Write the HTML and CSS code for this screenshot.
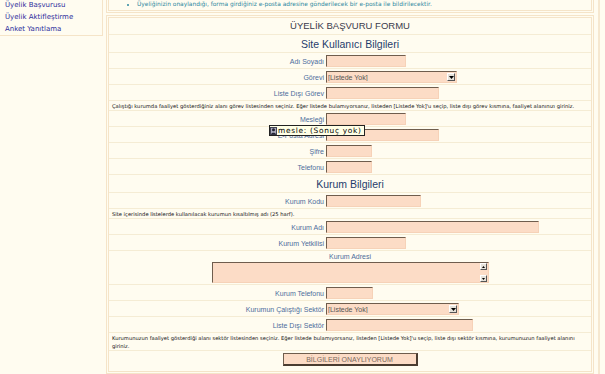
FILE: index.html
```html
<!DOCTYPE html>
<html lang="tr">
<head>
    <meta charset="UTF-8">
    <meta name="viewport" content="width=device-width, initial-scale=1.0">
    <title>Üyelik Başvurusu</title>
    <link rel="stylesheet" href="styles.css">
</head>
<body>
    <div class="page">
        <nav class="sidebar">
            <ul class="menu">
                <li><a href="#">Üyelik Başvurusu</a></li>
                <li><a href="#">Üyelik Aktifleştirme</a></li>
                <li><a href="#">Anket Yanıtlama</a></li>
            </ul>
        </nav>

        <main class="main">
            <div class="notice">
                <ul>
                    <li>Üyeliğinizin onaylandığı, forma girdiğiniz e-posta adresine gönderilecek bir e-posta ile bildirilecektir.</li>
                </ul>
            </div>

            <form class="form-box" onsubmit="return false">
                <div class="row title">ÜYELİK BAŞVURU FORMU</div>
                <div class="row section">Site Kullanıcı Bilgileri</div>

                <div class="row field">
                    <label for="adsoyad">Adı Soyadı</label>
                    <input id="adsoyad" type="text" class="w80">
                </div>
                <div class="row field">
                    <label for="gorev">Görevi</label>
                    <span class="select w131">
                        <select id="gorev"><option>[Listede Yok]</option></select>
                        <span class="drop"><svg width="5" height="3" viewBox="0 0 5 3"><path d="M0 0H5L2.5 3Z" fill="#000"/></svg></span>
                    </span>
                </div>
                <div class="row field">
                    <label for="disgorev">Liste Dışı Görev</label>
                    <input id="disgorev" type="text" class="w113">
                </div>
                <div class="row help">Çalıştığı kurumda faaliyet gösterdiğiniz alanı görev listesinden seçiniz. Eğer listede bulamıyorsanız, listeden [Listede Yok]'u seçip, liste dışı görev kısmına, faaliyet alanınızı giriniz.</div>
                <div class="row field">
                    <label for="meslek">Mesleği</label>
                    <input id="meslek" type="text" class="w80">
                </div>
                <div class="row field has-tip">
                    <label for="eposta">E-Posta Adresi</label>
                    <input id="eposta" type="text" class="w113">
                    <div class="tip">
                        <svg width="7" height="8" viewBox="0 0 7 8"><rect x="0" y="0" width="7" height="8" fill="#a9a9bb"/><rect x="0.5" y="0.5" width="6" height="7" fill="none" stroke="#445"/><circle cx="3.5" cy="2.8" r="1.5" fill="#223"/><path d="M1 7.5C1.2 5 5.8 5 6 7.5Z" fill="#223"/></svg>
                        <span>mesle: (Sonuç yok)</span>
                    </div>
                </div>
                <div class="row field">
                    <label for="sifre">Şifre</label>
                    <input id="sifre" type="password" class="w46">
                </div>
                <div class="row field">
                    <label for="telefon">Telefonu</label>
                    <input id="telefon" type="text" class="w46">
                </div>

                <div class="row section">Kurum Bilgileri</div>

                <div class="row field">
                    <label for="kurumkodu">Kurum Kodu</label>
                    <input id="kurumkodu" type="text" class="w95">
                </div>
                <div class="row help">Site içerisinde listelerde kullanılacak kurumun kısaltılmış adı (25 harf).</div>
                <div class="row field">
                    <label for="kurumadi">Kurum Adı</label>
                    <input id="kurumadi" type="text" class="w213">
                </div>
                <div class="row field">
                    <label for="yetkili">Kurum Yetkilisi</label>
                    <input id="yetkili" type="text" class="w80">
                </div>
                <div class="row block">
                    <label for="adres">Kurum Adresi</label>
                    <span class="area">
                        <textarea id="adres"></textarea>
                        <span class="scroll">
                            <span class="sbtn"><svg width="3" height="2" viewBox="0 0 3 2"><path d="M0 2H3L1.5 0Z" fill="#000"/></svg></span>
                            <span class="sbtn"><svg width="3" height="2" viewBox="0 0 3 2"><path d="M0 0H3L1.5 2Z" fill="#000"/></svg></span>
                        </span>
                    </span>
                </div>
                <div class="row field">
                    <label for="kurumtel">Kurum Telefonu</label>
                    <input id="kurumtel" type="text" class="w47">
                </div>
                <div class="row field">
                    <label for="sektor">Kurumun Çalıştığı Sektör</label>
                    <span class="select w133">
                        <select id="sektor"><option>[Listede Yok]</option></select>
                        <span class="drop"><svg width="5" height="3" viewBox="0 0 5 3"><path d="M0 0H5L2.5 3Z" fill="#000"/></svg></span>
                    </span>
                </div>
                <div class="row field">
                    <label for="dissektor">Liste Dışı Sektör</label>
                    <input id="dissektor" type="text" class="w147">
                </div>
                <div class="row help">Kurumunuzun faaliyet gösterdiği alanı sektör listesinden seçiniz. Eğer listede bulamıyorsanız, listeden [Listede Yok]'u seçip, liste dışı sektör kısmına, kurumunuzun faaliyet alanını giriniz.</div>
                <div class="row actions">
                    <button type="submit" class="submit-btn">BİLGİLERİ ONAYLIYORUM</button>
                </div>
            </form>
        </main>
    </div>
</body>
</html>
```

FILE: styles.css
```css
body {
    margin: 0;
    background-color: #fffcf0;
    font-family: "Liberation Sans", Arial, sans-serif;
    overflow: hidden;
}
.page {
    display: flex;
    width: 598px;
    height: 374px;
    border-right: 2px solid #f6e8d0;
}
.sidebar {
    width: 103px;
    flex-shrink: 0;
}
.menu {
    list-style: none;
    margin: -2px 0 0 0;
    padding: 0 0 0 5px;
    border: 1px solid #f5e4c8;
    border-left: none;
}
.menu li {
    height: 12px;
    line-height: 12px;
    font-family: "DejaVu Sans", Verdana, sans-serif;
    font-size: 7px;
}
.menu a {
    color: #2e2e9c;
    text-decoration: none;
}
.main {
    width: 488px;
    margin-left: 3px;
}
.notice {
    height: 11px;
    margin-top: -1px;
    border: 3px double #f5e4c8;
    border-top: none;
}
.notice ul {
    margin: 0;
    padding: 0 0 0 28px;
}
.notice li {
    font-family: "DejaVu Sans", Verdana, sans-serif;
    font-size: 5.9px;
    line-height: 11px;
    color: #2d88a0;
}
.form-box {
    margin-top: 2px;
    border: 3px double #f5e4c8;
    height: 359px;
    box-sizing: border-box;
}
.row {
    border-bottom: 1px solid #f5ecd4;
}
.title {
    height: 16px;
    line-height: 16px;
    text-align: center;
    font-size: 9.5px;
    color: #3a3a4c;
}
.section {
    height: 17px;
    line-height: 19px;
    text-align: center;
    font-size: 10.5px;
    color: #1f3c6c;
}
.field {
    display: grid;
    grid-template-columns: 215px auto;
    justify-content: start;
    align-items: center;
    column-gap: 2px;
    padding: 2px 0 1px 0;
    position: relative;
}
.field label,
.block label {
    text-align: right;
    font-size: 7px;
    color: #4d6c9c;
}
.help {
    padding: 1px 3px 0 3px;
    font-family: "DejaVu Sans", Verdana, sans-serif;
    font-size: 5.2px;
    line-height: 8px;
    color: #111;
}
input[type="text"],
input[type="password"],
textarea,
.select {
    box-sizing: border-box;
    height: 12px;
    margin: 0;
    padding: 0;
    background-color: #fcdcc6;
    border-style: solid;
    border-width: 1px;
    border-color: #6f5d4d #f6d2b8 #f6d2b8 #6f5d4d;
    font-family: inherit;
}
.select {
    display: inline-flex;
    align-items: center;
}
.select select {
    flex: 1;
    min-width: 0;
    height: 100%;
    border: none;
    padding: 0 0 0 1px;
    background: transparent;
    appearance: none;
    font-family: inherit;
    font-size: 7px;
    color: #555;
    outline: none;
}
.drop {
    display: flex;
    align-items: center;
    justify-content: center;
    width: 8px;
    height: 8px;
    margin-right: 1px;
    background-color: #e6e2da;
    border: 1px solid;
    border-color: #fff #555 #555 #fff;
    box-sizing: border-box;
}
.w46 { width: 46px; }
.w47 { width: 47px; }
.w80 { width: 80px; }
.w95 { width: 95px; }
.w113 { width: 113px; }
.w131 { width: 131px; }
.w133 { width: 133px; }
.w147 { width: 147px; }
.w213 { width: 213px; }
.tip {
    position: absolute;
    left: 160px;
    top: -2px;
    display: flex;
    align-items: center;
    gap: 1px;
    padding: 0 2px 0 0;
    background-color: #ffffe6;
    border: 1px solid #222;
    font-family: "DejaVu Sans", Verdana, sans-serif;
    font-size: 7.4px;
    letter-spacing: 0.7px;
    line-height: 9px;
    color: #000;
}
.block {
    display: flex;
    flex-direction: column;
    align-items: center;
    padding: 1px 0 1px 0;
}
.block label {
    text-align: center;
    line-height: 9px;
}
.area {
    display: flex;
    width: 277px;
    height: 21px;
    margin-top: 1px;
    background-color: #fcdcc6;
    border: 1px solid;
    border-color: #6f5d4d #f6d2b8 #f6d2b8 #6f5d4d;
    box-sizing: border-box;
}
.area textarea {
    flex: 1;
    height: 100%;
    border: none;
    resize: none;
    background: transparent;
}
.scroll {
    display: flex;
    flex-direction: column;
    justify-content: space-between;
    width: 7px;
    margin-right: 1px;
}
.sbtn {
    display: flex;
    align-items: center;
    justify-content: center;
    height: 7px;
    background-color: #e6e2da;
    border: 1px solid;
    border-color: #fff #555 #555 #fff;
    box-sizing: border-box;
}
.actions {
    display: flex;
    justify-content: center;
    padding: 2px 0 3px 0;
    border-bottom: none;
}
.submit-btn {
    width: 135px;
    height: 13px;
    padding: 0;
    background-color: #fcdcc6;
    border-style: solid;
    border-width: 1px 2px 2px 1px;
    border-color: #6f5d4d #4a3c30 #4a3c30 #6f5d4d;
    font-family: inherit;
    font-size: 7px;
    color: #7a6a5e;
}
```
